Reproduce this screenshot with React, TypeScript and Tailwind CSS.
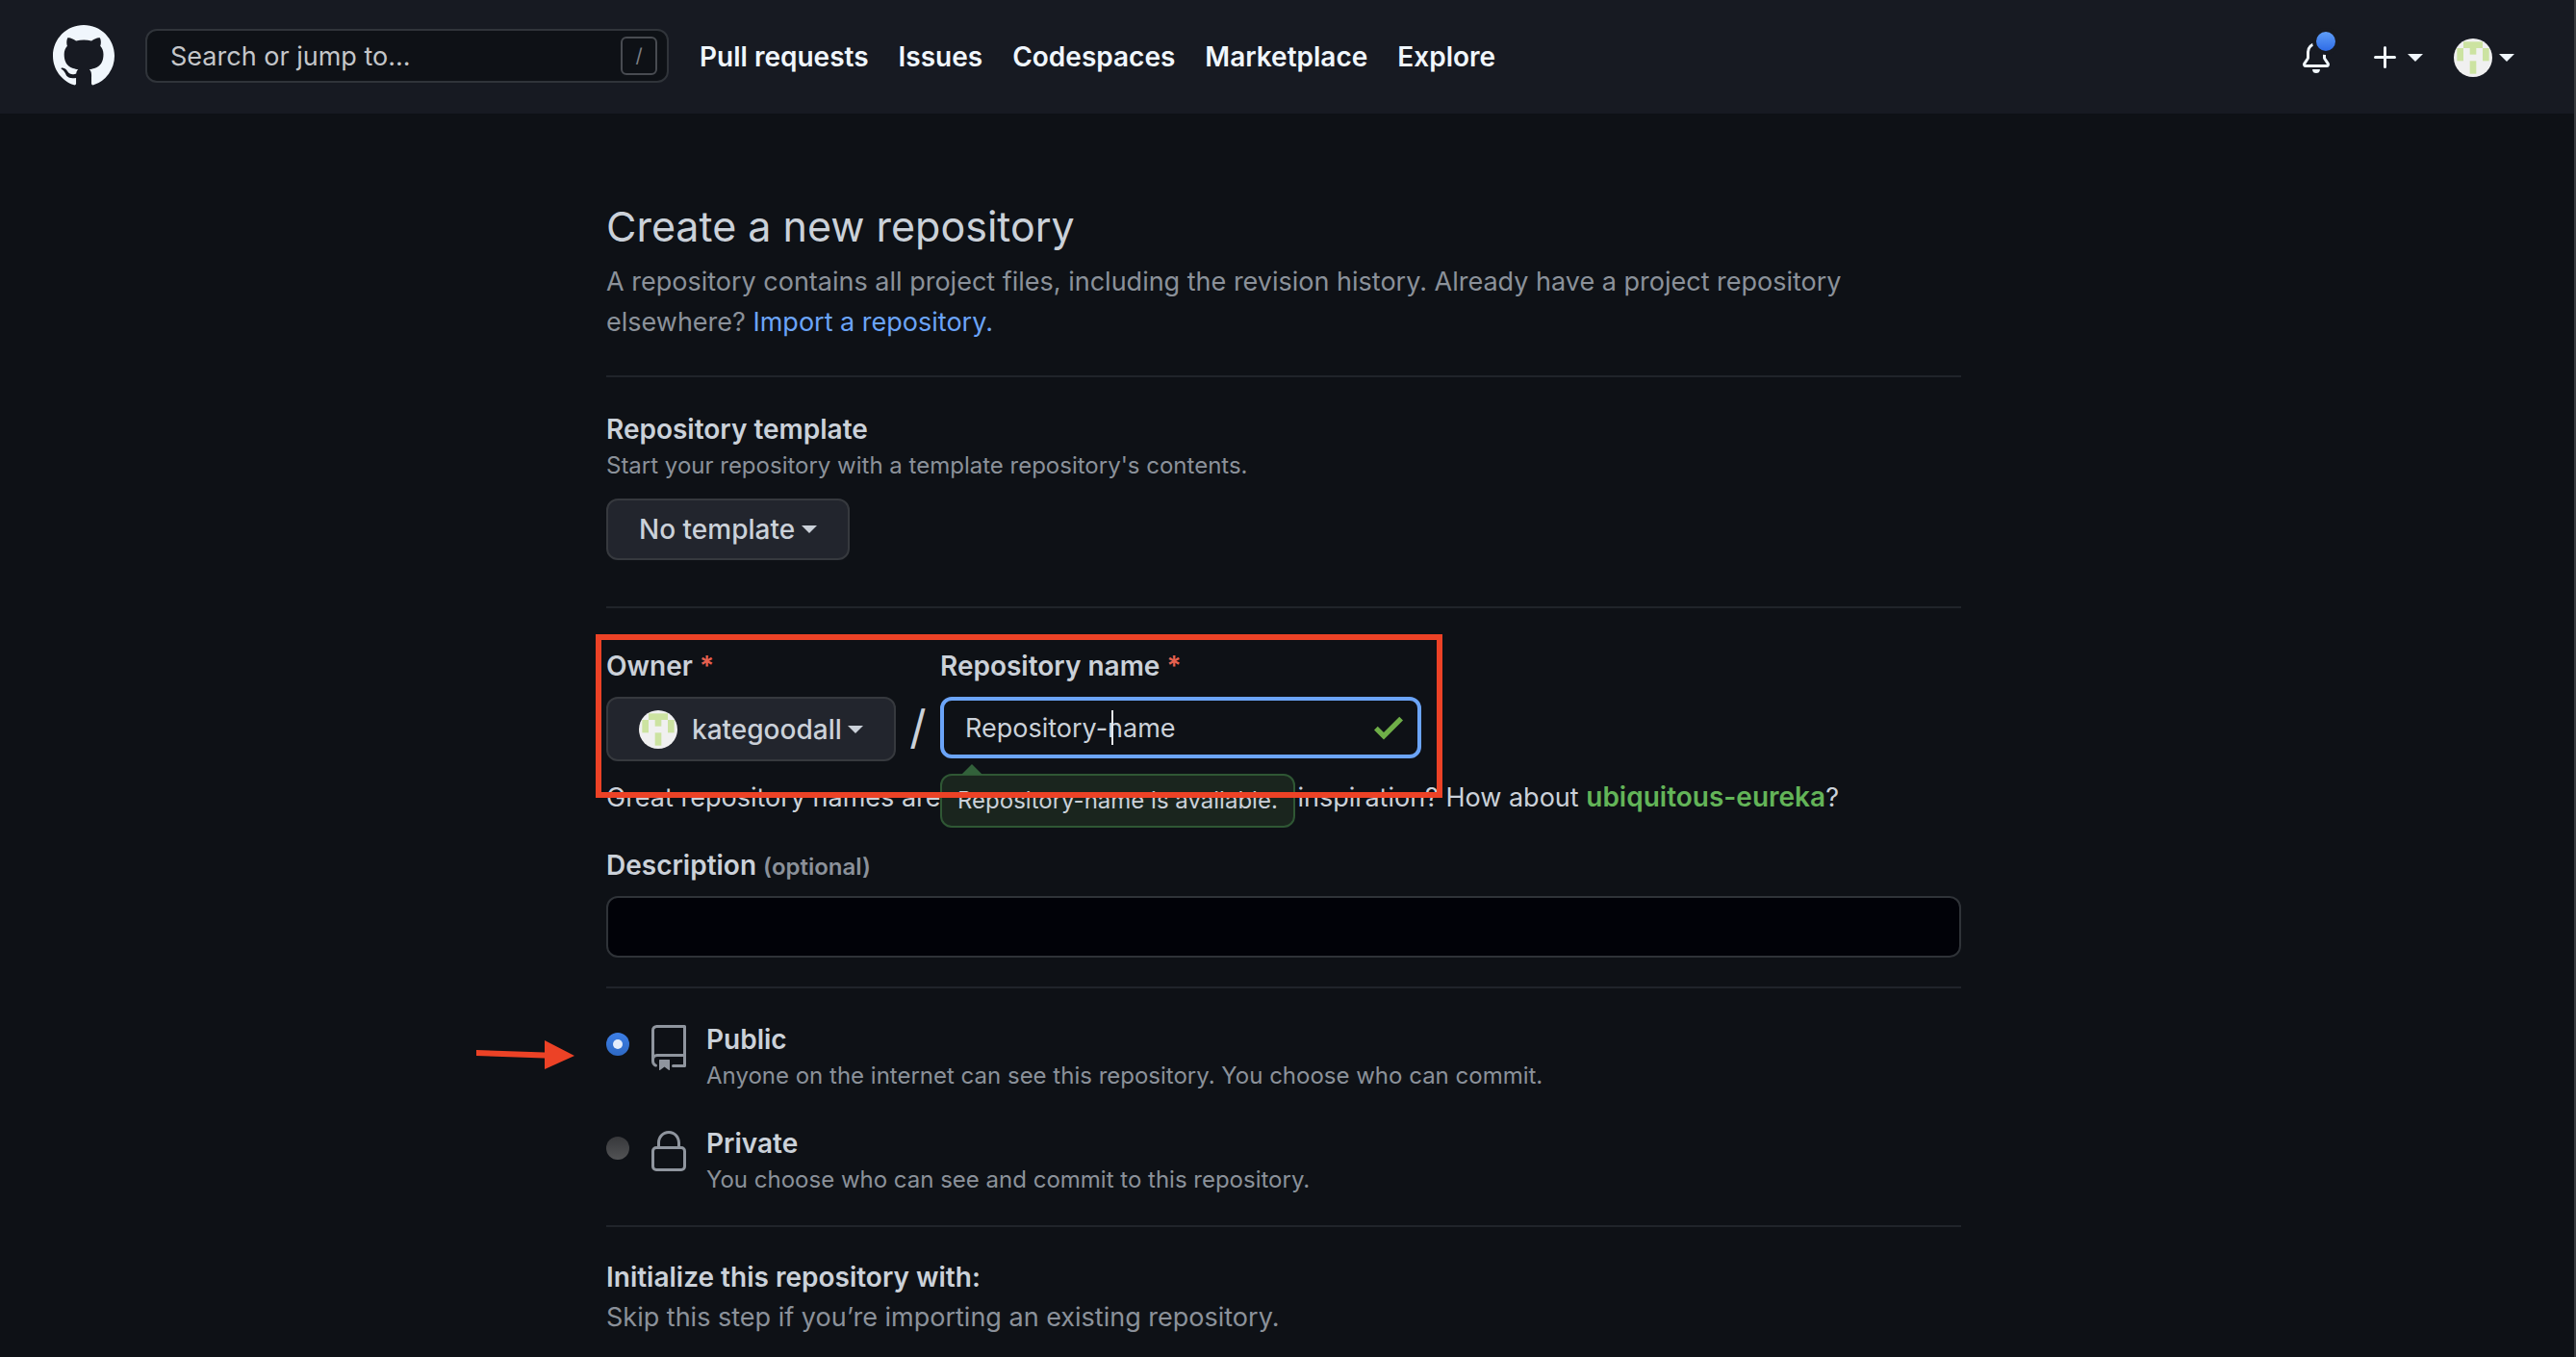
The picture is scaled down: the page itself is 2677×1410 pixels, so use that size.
import React, { useState } from "react";

const FONT = "font-['Inter',sans-serif]";

function Caret({ className = "" }: { className?: string }) {
  return (
    <span
      aria-hidden="true"
      className={`inline-block h-0 w-0 border-x-8 border-t-8 border-x-transparent border-t-current ${className}`}
    />
  );
}

function Avatar() {
  return (
    <svg viewBox="0 0 120 120" className="size-10 shrink-0 rounded-full" aria-hidden="true">
      <rect width="120" height="120" fill="#f0f0f0" />
      <g fill="#cce3a1">
        <rect x="30" y="10" width="60" height="20" />
        <rect x="10" y="30" width="20" height="40" />
        <rect x="90" y="30" width="20" height="40" />
        <rect x="50" y="30" width="20" height="20" />
        <rect x="50" y="70" width="20" height="40" />
      </g>
    </svg>
  );
}

function MarkGithub() {
  return (
    <svg viewBox="0 0 16 16" className="size-16" fill="currentColor" aria-hidden="true">
      <path
        fillRule="evenodd"
        d="M8 0C3.58 0 0 3.58 0 8c0 3.54 2.29 6.53 5.47 7.59.4.07.55-.17.55-.38 0-.19-.01-.82-.01-1.49-2.01.37-2.53-.49-2.69-.94-.09-.23-.48-.94-.82-1.13-.28-.15-.68-.52-.01-.53.63-.01 1.08.58 1.23.82.72 1.21 1.87.87 2.33.66.07-.52.28-.87.51-1.07-1.78-.2-3.64-.89-3.64-3.95 0-.87.31-1.59.82-2.15-.08-.2-.36-1.02.08-2.12 0 0 .67-.21 2.2.82.64-.18 1.32-.27 2-.27.68 0 1.36.09 2 .27 1.53-1.04 2.2-.82 2.2-.82.44 1.1.16 1.92.08 2.12.51.56.82 1.27.82 2.15 0 3.07-1.87 3.75-3.65 3.95.29.25.54.73.54 1.48 0 1.07-.01 1.93-.01 2.2 0 .21.15.46.55.38A8.013 8.013 0 0016 8c0-4.42-3.58-8-8-8z"
      />
    </svg>
  );
}

function BellIcon() {
  return (
    <svg viewBox="0 0 16 16" className="size-8" fill="currentColor" aria-hidden="true">
      <path d="M8 16a2 2 0 001.985-1.75c.017-.137-.097-.25-.235-.25h-3.5c-.138 0-.252.113-.235.25A2 2 0 008 16z" />
      <path
        fillRule="evenodd"
        d="M8 1.5A3.5 3.5 0 004.5 5v2.947c0 .346-.102.683-.294.97l-1.703 2.556a.018.018 0 00-.003.01l.001.006c0 .002.002.004.004.006a.017.017 0 00.006.004l.007.001h10.964l.007-.001a.016.016 0 00.006-.004.016.016 0 00.004-.006l.001-.007a.017.017 0 00-.003-.01l-1.703-2.554a1.75 1.75 0 01-.294-.97V5A3.5 3.5 0 008 1.5zM3 5a5 5 0 0110 0v2.947c0 .05.015.098.042.139l1.703 2.555A1.518 1.518 0 0113.482 13H2.518a1.518 1.518 0 01-1.263-2.36l1.703-2.554A.25.25 0 003 7.947V5z"
      />
    </svg>
  );
}

function PlusIcon() {
  return (
    <svg viewBox="0 0 16 16" className="size-8" fill="currentColor" aria-hidden="true">
      <path d="M7.75 2a.75.75 0 01.75.75V7h4.25a.75.75 0 110 1.5H8.5v4.25a.75.75 0 11-1.5 0V8.5H2.75a.75.75 0 010-1.5H7V2.75A.75.75 0 017.75 2z" />
    </svg>
  );
}

function RepoIcon() {
  return (
    <svg viewBox="0 0 24 24" className="size-12" fill="currentColor" aria-hidden="true">
      <path
        fillRule="evenodd"
        d="M3 2.75A2.75 2.75 0 015.75 0h14.5a.75.75 0 01.75.75v20.5a.75.75 0 01-.75.75h-6a.75.75 0 010-1.5h5.25v-4H6A1.5 1.5 0 004.5 18v.75c0 .716.43 1.334 1.05 1.605a.75.75 0 01-.6 1.374A3.25 3.25 0 013 18.75v-16zM19.5 1.5V15H6c-.546 0-1.059.146-1.5.401V2.75c0-.69.56-1.25 1.25-1.25H19.5z"
      />
      <path d="M7 18.25a.25.25 0 01.25-.25h5a.25.25 0 01.25.25v5.01a.25.25 0 01-.397.201l-2.206-1.604a.25.25 0 00-.294 0L7.397 23.46a.25.25 0 01-.397-.2v-5.01z" />
    </svg>
  );
}

function LockIcon() {
  return (
    <svg viewBox="0 0 24 24" className="size-12" fill="currentColor" aria-hidden="true">
      <path
        fillRule="evenodd"
        d="M6 9V7.25C6 3.845 8.503 1 12 1s6 2.845 6 6.25V9h.5a2.5 2.5 0 012.5 2.5v8a2.5 2.5 0 01-2.5 2.5h-13A2.5 2.5 0 013 19.5v-8A2.5 2.5 0 015.5 9H6zm1.5-1.75C7.5 4.58 9.422 2.5 12 2.5c2.578 0 4.5 2.08 4.5 4.75V9h-9V7.25zm-3 4.25a1 1 0 011-1h13a1 1 0 011 1v8a1 1 0 01-1 1h-13a1 1 0 01-1-1v-8z"
      />
    </svg>
  );
}

function Header() {
  return (
    <header className="flex h-[118px] items-center bg-[#171a22] pr-[62px] pl-[55px] text-[#f0f6fc]">
      <a href="#home" aria-label="Homepage" className="pb-0.5">
        <MarkGithub />
      </a>
      <div className="ml-8 pb-0.5">
        <div className="relative w-[544px]">
          <input
            type="text"
            aria-label="Search or jump to"
            placeholder="Search or jump to..."
            className="block h-14 w-full rounded-xl border-2 border-[#30343a] bg-[#0e1116] px-6 text-[27px] text-[#c4c6c9] outline-none placeholder:text-[#c4c6c9]"
          />
          <kbd
            className={`${FONT} absolute top-2 right-3 flex h-10 w-[38px] items-center justify-center rounded-md border-2 border-[#484b51] text-xl text-[#7c7f85]`}
          >
            /
          </kbd>
        </div>
      </div>
      <nav className="ml-8 flex gap-[31px] text-[28px] font-semibold">
        <a href="#pulls">Pull requests</a>
        <a href="#issues">Issues</a>
        <a href="#codespaces">Codespaces</a>
        <a href="#marketplace">Marketplace</a>
        <a href="#explore">Explore</a>
      </nav>
      <div className="ml-auto flex items-center pt-0.5">
        <button type="button" aria-label="Notifications" className="relative mr-10">
          <BellIcon />
          <span className="absolute -top-[15px] -right-2 size-7 rounded-full border-4 border-[#171a22] bg-linear-to-b from-[#5f9df7] to-[#2f6be6]" />
        </button>
        <button type="button" aria-label="Create new" className="mr-8 flex items-center gap-[7px]">
          <PlusIcon />
          <Caret />
        </button>
        <button type="button" aria-label="Account menu" className="flex items-center gap-[7px]">
          <Avatar />
          <Caret />
        </button>
      </div>
    </header>
  );
}

function Divider({ className = "" }: { className?: string }) {
  return <hr className={`border-t-2 border-[#20242a] ${className}`} />;
}

function Required() {
  return <span className="text-[#e5604f]"> *</span>;
}

type VisibilityProps = {
  id: string;
  title: string;
  note: string;
  icon: React.ReactNode;
  checked: boolean;
  onSelect: () => void;
};

function Visibility({ id, title, note, icon, checked, onSelect }: VisibilityProps) {
  return (
    <div className="flex items-start">
      <input
        type="radio"
        id={id}
        name="visibility"
        checked={checked}
        onChange={onSelect}
        className="mt-4 flex size-6 appearance-none items-center justify-center rounded-full bg-linear-to-b from-[#37383b] to-[#525355] checked:from-[#3d7fe6] checked:to-[#2e69c4] checked:before:size-2.5 checked:before:rounded-full checked:before:bg-[#e4edfb] checked:before:content-['']"
      />
      <span className="mt-2 ml-[17px] text-[#8f959e]">{icon}</span>
      <label htmlFor={id} className="mt-0.5 ml-[15px] block">
        <span className="block h-[41px] text-[28px] leading-[42px] font-semibold">{title}</span>
        <span className="block text-2xl leading-9 text-[#8b919a]">{note}</span>
      </label>
    </div>
  );
}

export default function App() {
  const [name, setName] = useState("Repository-name");
  const [description, setDescription] = useState("");
  const [visibility, setVisibility] = useState("public");

  return (
    <div className={`${FONT} min-h-screen border-r-2 border-[#3a3c40] bg-[#0e1116] text-[#cbd1d9]`}>
      <Header />
      <div className="pr-[7px]">
        <main className="mx-auto max-w-[1408px] pt-[81px]">
          <h1 className="text-[43px] leading-[73px]">Create a new repository</h1>
          <p className="text-[27px] leading-[42px] text-[#8b919a]">
            A repository contains all project files, including the revision history. Already have a project repository
            elsewhere?{" "}
            <a href="#import" className="text-[#6ba4f8]">
              Import a repository.
            </a>
          </p>
          <Divider className="mt-[34px]" />

          <form onSubmit={(e) => e.preventDefault()}>
            <section className="mt-[33px]">
              <h2 className="h-[41px] text-[28px] leading-[42px] font-semibold">Repository template</h2>
              <p className="text-2xl leading-9 text-[#8b919a]">
                Start your repository with a template repository's contents.
              </p>
              <button
                type="button"
                className="mt-4 flex h-16 items-center gap-[7px] rounded-xl border-2 border-[#36393e] bg-[#22252d] px-8 text-[28px] font-medium"
              >
                No template
                <Caret />
              </button>
            </section>
            <Divider className="mt-12" />

            <section className="relative mt-[39px]">
              <div className="flex items-start">
                <div>
                  <label htmlFor="owner" className="block text-[28px] leading-[42px] font-semibold">
                    Owner
                    <Required />
                  </label>
                  <button
                    type="button"
                    id="owner"
                    className="mt-[11px] flex h-[67px] w-[301px] items-center rounded-xl border-2 border-[#36393e] bg-[#22252d] pl-8 text-[28px] font-medium"
                  >
                    <Avatar />
                    <span className="mr-1.5 ml-[15px]">kategoodall</span>
                    <Caret />
                  </button>
                </div>
                <span className="mt-[53px] w-[46px] text-center text-5xl leading-[64px]">/</span>
                <div className="w-[500px]">
                  <label htmlFor="repo-name" className="block text-[28px] leading-[42px] font-semibold">
                    Repository name
                    <Required />
                  </label>
                  <div className="relative mt-[11px]">
                    <input
                      id="repo-name"
                      type="text"
                      value={name}
                      onChange={(e) => setName(e.target.value)}
                      className="block h-16 w-full rounded-xl border-4 border-[#6ba4f8] bg-[#0e1116] pr-16 pl-[22px] text-[27px] outline-none"
                    />
                    <span className="absolute top-3.5 left-[178px] h-9 w-0.5 bg-[#e6e9ed]" />
                    <svg
                      viewBox="0 0 12 16"
                      className="absolute top-3 right-[19px] h-10 w-[30px]"
                      fill="#6fae48"
                      aria-hidden="true"
                    >
                      <path d="M12 5l-8 8-4-4 1.5-1.5L4 10l6.5-6.5L12 5z" />
                    </svg>
                    <div
                      role="status"
                      className="absolute top-20 left-0 rounded-xl border-2 border-[#2f5734] bg-[#1a251e] px-4 py-2 text-2xl leading-9 whitespace-nowrap"
                    >
                      <span className="absolute -top-3 left-5 h-0 w-0 border-x-[11px] border-b-[11px] border-x-transparent border-b-[#32613a]" />
                      Repository-name is available.
                    </div>
                  </div>
                </div>
              </div>
              <p className="mt-4 text-[27px] leading-[42px]">
                Great repository names are short and memorable. Need inspiration? How about{" "}
                <strong className="text-[28px] font-semibold text-[#63b458]">ubiquitous-eureka</strong>?
              </p>
              <div className="pointer-events-none absolute -top-3 -left-[11px] h-[170px] w-[880px] border-6 border-[#ec4226]" />
            </section>

            <section className="mt-7">
              <label htmlFor="description" className="block text-[28px] leading-[42px] font-semibold">
                Description <span className="text-2xl text-[#8b919a]">(optional)</span>
              </label>
              <input
                id="description"
                type="text"
                value={description}
                onChange={(e) => setDescription(e.target.value)}
                className="mt-[11px] block h-16 w-full rounded-xl border-2 border-[#2f3338] bg-[#010208] px-6 text-[27px] outline-none"
              />
            </section>
            <Divider className="mt-[30px]" />

            <section className="relative mt-[30px] flex flex-col gap-[29px]">
              <Visibility
                id="public"
                title="Public"
                note="Anyone on the internet can see this repository. You choose who can commit."
                icon={<RepoIcon />}
                checked={visibility === "public"}
                onSelect={() => setVisibility("public")}
              />
              <Visibility
                id="private"
                title="Private"
                note="You choose who can see and commit to this repository."
                icon={<LockIcon />}
                checked={visibility === "private"}
                onSelect={() => setVisibility("private")}
              />
              <svg
                viewBox="0 0 102 30"
                className="pointer-events-none absolute top-6 -left-[135px] h-[30px] w-[102px]"
                fill="#ec4226"
                aria-hidden="true"
              >
                <path d="M0 10L71 12.5V0L102 16L71 30V18.5L0 16Z" />
              </svg>
            </section>
            <Divider className="mt-[29px]" />

            <section className="mt-[31px]">
              <h2 className="text-[28px] leading-[42px] font-semibold">Initialize this repository with:</h2>
              <p className="text-[27px] leading-[42px] text-[#8b919a]">
                Skip this step if you’re importing an existing repository.
              </p>
            </section>
          </form>
        </main>
      </div>
    </div>
  );
}
